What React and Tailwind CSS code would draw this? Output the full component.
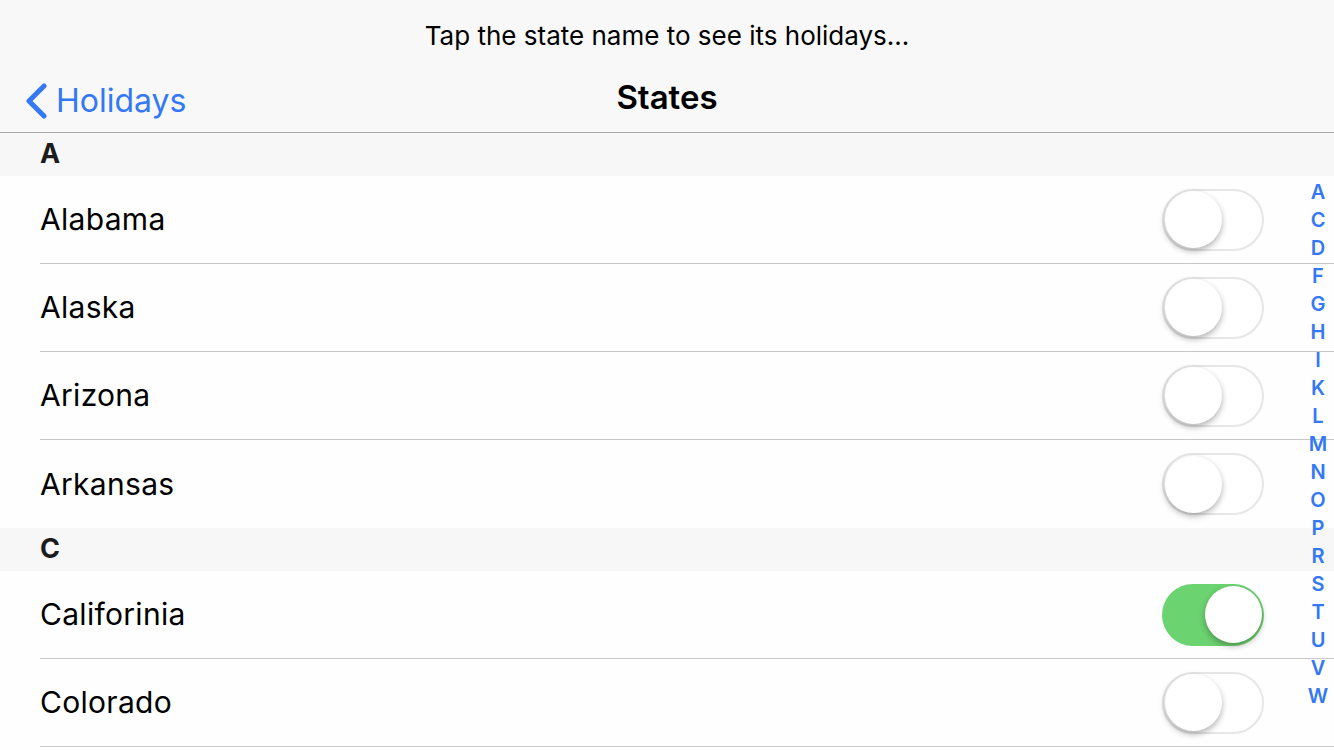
import React from "react";

const sections = [
  { letter: "A", states: [["Alabama", false], ["Alaska", false], ["Arizona", false], ["Arkansas", false]], last: true },
  { letter: "C", states: [["Califorinia", true], ["Colorado", false]], last: false },
];

const indexLetters = ["A", "C", "D", "F", "G", "H", "I", "K", "L", "M", "N", "O", "P", "R", "S", "T", "U", "V", "W"];

function Toggle({ on }) {
  if (on) {
    return (
      <div className="w-[102px] h-[62px] rounded-full bg-[#6bd36f] flex items-center justify-end px-[2px]">
        <div className="w-[57px] h-[57px] rounded-full bg-white shadow-[0_3px_6px_rgba(0,0,0,0.3)]" />
      </div>
    );
  }
  return (
    <div className="w-[102px] h-[62px] rounded-full bg-white border-2 border-[#e6e6e6] flex items-center px-[1px]">
      <div className="w-[57px] h-[57px] rounded-full bg-white shadow-[0_3px_6px_rgba(0,0,0,0.3)]" />
    </div>
  );
}

function Row({ name, on, noLine }) {
  return (
    <div className="h-[88px] pl-[40px] bg-[#fdfefd]">
      <div className={"h-full flex items-center justify-between pr-[70px] " + (noLine ? "" : "border-b border-[#c8c8c8]")}>
        <span className="text-[30px] tracking-[0.01em] text-black">{name}</span>
        <Toggle on={on} />
      </div>
    </div>
  );
}

export default function App() {
  return (
    <div className="w-[1334px] h-[750px] overflow-hidden bg-[#fdfefd] relative" style={{ fontFamily: "Inter, 'Liberation Sans', sans-serif" }}>
      <div className="h-[133px] bg-[#f7f8f7] border-b border-[#a9a9a9] flex flex-col">
        <div className="h-[70px] flex items-center justify-center text-[26px] text-black">
          Tap the state name to see its holidays...
        </div>
        <div className="flex-1 relative flex items-center justify-center pb-[6px]">
          <div className="absolute left-[24px] top-[7px] flex items-center text-[#3478f6]">
            <svg width="24" height="36" viewBox="0 0 24 36" className="mr-[8px]">
              <path d="M20 3 L5 18 L20 33" fill="none" stroke="#3478f6" strokeWidth="5" strokeLinecap="round" strokeLinejoin="round" />
            </svg>
            <span className="text-[32px]">Holidays</span>
          </div>
          <span className="text-[33px] font-semibold text-black">States</span>
        </div>
      </div>
      {sections.map((s) => (
        <div key={s.letter}>
          <div className="h-[43px] bg-[#f6f7f6] flex items-center pl-[40px] text-[27px] font-bold text-[#1c1c1c]">{s.letter}</div>
          {s.states.map(([name, on], i) => (
            <Row key={name} name={name} on={on} noLine={s.last && i === s.states.length - 1} />
          ))}
        </div>
      ))}
      <div className="absolute right-0 top-[178px] w-[32px] flex flex-col items-center">
        {indexLetters.map((l) => (
          <div key={l} className="h-[28px] leading-[28px] text-[20px] font-semibold text-[#3478f6]">{l}</div>
        ))}
      </div>
    </div>
  );
}
